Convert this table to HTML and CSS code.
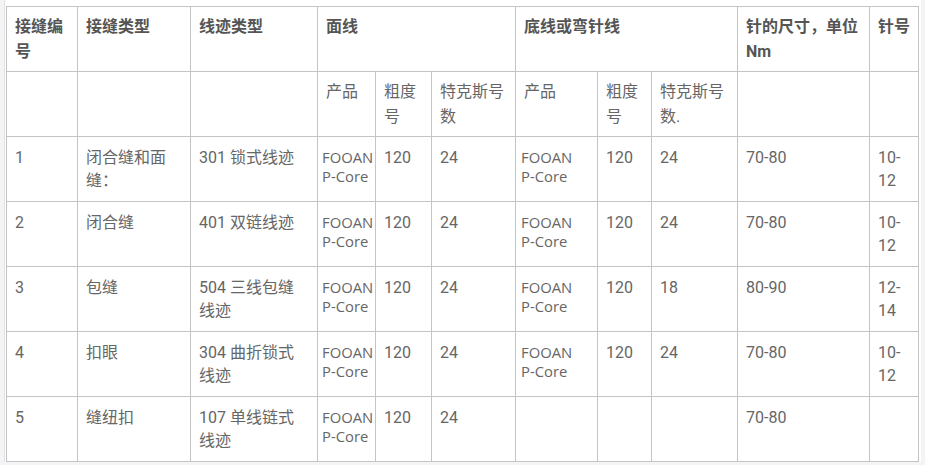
FILE: index.html
```html
<!DOCTYPE html>
<html lang="zh-CN">
<head>
<meta charset="utf-8">
<title>接缝规格</title>
<link rel="stylesheet" href="styles.css">
</head>
<body>
<div class="page">
<table class="spec">
<colgroup>
<col class="w71"><col class="w113"><col class="w127"><col class="w58"><col class="w56"><col class="w84"><col class="w82"><col class="w54"><col class="w86"><col class="w132"><col class="w49">
</colgroup>
<thead>
<tr class="head">
<th>接缝编号</th><th>接缝类型</th><th>线迹类型</th><th colspan="3">面线</th><th colspan="3">底线或弯针线</th><th>针的尺寸，单位Nm</th><th>针号</th>
</tr>
<tr class="sub">
<td></td><td></td><td></td><td>产品</td><td>粗度号</td><td>特克斯号数</td><td>产品</td><td>粗度号</td><td>特克斯号数.</td><td></td><td></td>
</tr>
</thead>
<tbody>
<tr>
<td>1</td><td>闭合缝和面缝：</td><td>301 锁式线迹</td><td class="prod"><span class="ln">FOOAN</span> <span class="ln">P-Core</span></td><td>120</td><td>24</td><td class="prod b"><span class="ln">FOOAN</span> <span class="ln">P-Core</span></td><td>120</td><td>24</td><td>70-80</td><td>10-12</td>
</tr>
<tr>
<td>2</td><td>闭合缝</td><td>401 双链线迹</td><td class="prod"><span class="ln">FOOAN</span> <span class="ln">P-Core</span></td><td>120</td><td>24</td><td class="prod b"><span class="ln">FOOAN</span> <span class="ln">P-Core</span></td><td>120</td><td>24</td><td>70-80</td><td>10-12</td>
</tr>
<tr>
<td>3</td><td>包缝</td><td>504 三线包缝线迹</td><td class="prod"><span class="ln">FOOAN</span> <span class="ln">P-Core</span></td><td>120</td><td>24</td><td class="prod b"><span class="ln">FOOAN</span> <span class="ln">P-Core</span></td><td>120</td><td>18</td><td>80-90</td><td>12-14</td>
</tr>
<tr>
<td>4</td><td>扣眼</td><td>304 曲折锁式线迹</td><td class="prod"><span class="ln">FOOAN</span> <span class="ln">P-Core</span></td><td>120</td><td>24</td><td class="prod b"><span class="ln">FOOAN</span> <span class="ln">P-Core</span></td><td>120</td><td>24</td><td>70-80</td><td>10-12</td>
</tr>
<tr>
<td>5</td><td>缝纽扣</td><td>107 单线链式线迹</td><td class="prod"><span class="ln">FOOAN</span> <span class="ln">P-Core</span></td><td>120</td><td>24</td><td></td><td></td><td></td><td>70-80</td><td></td>
</tr>
</tbody>
</table>
</div>
</body>
</html>
```

FILE: styles.css
```css
html {
  background: #f4f4f6;
}
body {
  margin: 0;
}
.page {
  margin: 0 4px;
  background: #ffffff;
  border-left: 1px solid #e2e2e4;
  padding: 6px 2px 0 1px;
}
.spec {
  width: 913px;
  table-layout: fixed;
  border-collapse: collapse;
  font-family: Roboto, "Noto Sans CJK SC", sans-serif;
  font-size: 16px;
  color: #666666;
}
.w71 { width: 71px; }
.w113 { width: 113px; }
.w127 { width: 127px; }
.w58 { width: 58px; }
.w56 { width: 56px; }
.w84 { width: 84px; }
.w82 { width: 82px; }
.w54 { width: 54px; }
.w86 { width: 86px; }
.w132 { width: 132px; }
.w49 { width: 49px; }
.spec th,
.spec td {
  border: 1px solid #c4c4c4;
  vertical-align: top;
  text-align: left;
  padding: 9px 10px 9px 8px;
  line-height: 23px;
  height: 46px;
  box-sizing: content-box;
}
.spec .head th {
  font-weight: 700;
  color: #555555;
  line-height: 25px;
  padding: 7px 8px 7px 8px;
  height: 50px;
}
.spec .sub td {
  line-height: 25px;
  padding: 7px 8px 7px 8px;
  height: 50px;
}
.spec td.prod {
  font-family: "Open Sans", "Noto Sans CJK SC", sans-serif;
  font-size: 14.8px;
  line-height: 19px;
  padding: 11px 0 9px 4px;
  height: 44px;
  overflow: visible;
}
.spec td.prod.b {
  padding-left: 5px;
}
.ln {
  display: block;
  white-space: nowrap;
}
```
